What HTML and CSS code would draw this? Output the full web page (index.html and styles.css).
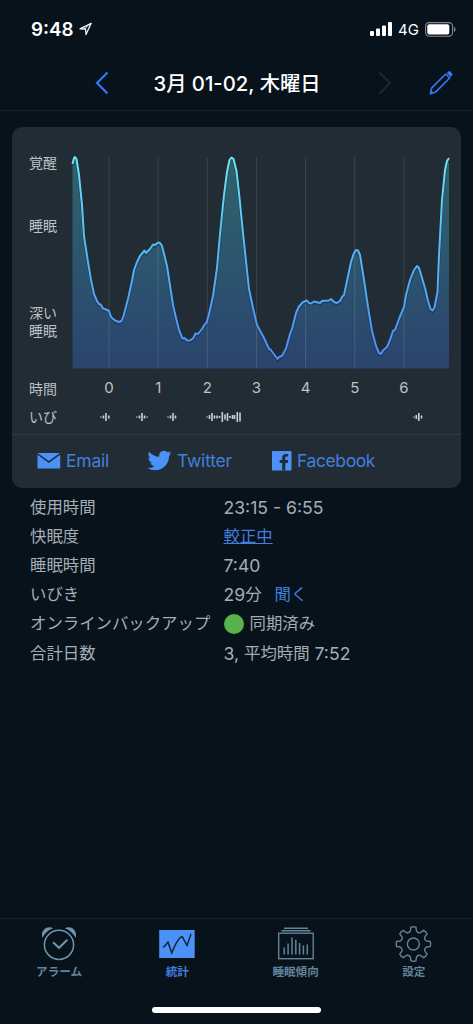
FILE: index.html
```html
<!DOCTYPE html>
<html lang="ja">
<head>
    <meta charset="UTF-8">
    <meta name="viewport" content="width=device-width, initial-scale=1.0">
    <title>統計</title>
    <link rel="stylesheet" href="styles.css">
</head>
<body>
    <div class="app">
        <div class="status-bar">
            <div class="status-left">
                <span class="clock">9:48</span>
                <svg width="14" height="14" viewBox="0 0 14 14">
                    <path d="M1 6.8 12.2 1.2 7 12.6 6.6 7.2Z" fill="none" stroke="#fff" stroke-width="1.2" stroke-linejoin="round"/>
                    <path d="M1 6.8 12.2 1.2 6.6 7.2Z" fill="#fff" opacity="0.5"/>
                </svg>
            </div>
            <div class="status-right">
                <svg width="22" height="14" viewBox="0 0 22 14" fill="#fff">
                    <rect x="0" y="9" width="4" height="5" rx="1"/>
                    <rect x="6" y="6.5" width="4" height="7.5" rx="1"/>
                    <rect x="12" y="3.5" width="4" height="10.5" rx="1"/>
                    <rect x="18" y="0" width="4" height="14" rx="1"/>
                </svg>
                <span class="network">4G</span>
                <svg width="31" height="15" viewBox="0 0 31 15">
                    <rect x="0.6" y="0.6" width="27" height="13.6" rx="3.6" fill="none" stroke="#858b90" stroke-width="1.1"/>
                    <rect x="2.3" y="2.3" width="22" height="10.2" rx="2" fill="#fff"/>
                    <path d="M29 5v4.8c1-.4 1.5-1.3 1.5-2.4S30 5.4 29 5Z" fill="#858b90"/>
                </svg>
            </div>
        </div>

        <div class="nav">
            <svg class="prev" width="14" height="24" viewBox="0 0 14 24">
                <path d="M12.5 1.5 2 12l10.5 10.5" fill="none" stroke="#3478f6" stroke-width="2.2"/>
            </svg>
            <h1 class="title">3月 01-02, 木曜日</h1>
            <svg class="next" width="14" height="24" viewBox="0 0 14 24">
                <path d="M1.5 1.5 12 12 1.5 22.5" fill="none" stroke="#1d2832" stroke-width="2"/>
            </svg>
            <svg class="edit" width="26" height="26" viewBox="0 0 26 26">
                <path d="M3.6 18.1 17.7 4 21.7 8 7.6 22.1 2.4 23.7Z" fill="none" stroke="#3478f6" stroke-width="1.6" stroke-linejoin="round"/>
                <path d="M2.4 23.7 3.3 20.4 5.6 22.7Z" fill="#3478f6"/>
                <path d="M18.8 3 20.1 1.7q1.2-1.2 2.4 0l1.5 1.5q1.2 1.2 0 2.4L22.7 6.9Z" fill="#3478f6"/>
            </svg>
        </div>

        <div class="card">
            <div class="chart-row">
                <div class="levels">
                    <span>覚醒</span>
                    <span>睡眠</span>
                    <span>深い<br>睡眠</span>
                </div>
                <svg class="chart" width="379" height="217" viewBox="71 152 379 217">
                    <defs>
                        <linearGradient id="line" gradientUnits="userSpaceOnUse" x1="0" y1="156" x2="0" y2="360">
                            <stop offset="0" stop-color="#6ee8f4"/>
                            <stop offset="0.45" stop-color="#56b9f5"/>
                            <stop offset="1" stop-color="#4a8df8"/>
                        </linearGradient>
                        <linearGradient id="area" gradientUnits="userSpaceOnUse" x1="0" y1="156" x2="0" y2="369">
                            <stop offset="0" stop-color="#30626c"/>
                            <stop offset="0.5" stop-color="#2c556e"/>
                            <stop offset="1" stop-color="#2a446e"/>
                        </linearGradient>
                    </defs>
                    <path id="fill" fill="url(#area)"/>
                    <g id="grid" stroke="#fff" stroke-opacity="0.12"></g>
                    <path id="shadow" fill="none" stroke="#0c1924" stroke-opacity="0.35" stroke-width="3" transform="translate(0 1)"/>
                    <path id="curve" fill="none" stroke="url(#line)" stroke-width="2" stroke-linejoin="round"/>
                </svg>
            </div>

            <div class="hours">
                <span class="row-label">時間</span>
                <span>0</span><span>1</span><span>2</span><span>3</span><span>4</span><span>5</span><span>6</span>
            </div>

            <div class="snore">
                <span class="row-label">いび</span>
                <svg width="379" height="14" viewBox="71 409 379 14">
                    <path id="snore" fill="none" stroke="#cdd0d2" stroke-width="1.6"/>
                </svg>
            </div>

            <div class="share">
                <a class="email">
                    <svg width="24" height="16" viewBox="0 0 24 16" fill="#4b91f8">
                        <path d="M.5 0h22.5L11.8 7.9Z"/>
                        <path d="M.5 1.7 11.8 9.9 23.2 1.7V15.5H.5Z"/>
                    </svg>
                    Email
                </a>
                <a class="twitter">
                    <svg width="25" height="21" viewBox="0 1.5 24 21" fill="#4b91f8">
                        <path d="M23.95 4.57a10 10 0 0 1-2.82.77 4.96 4.96 0 0 0 2.16-2.72c-.95.56-2 .96-3.13 1.18a4.92 4.92 0 0 0-8.38 4.48C7.69 8.09 4.07 6.13 1.64 3.16a4.82 4.82 0 0 0-.67 2.48c0 1.71.87 3.21 2.19 4.1a4.9 4.9 0 0 1-2.23-.62v.06a4.92 4.92 0 0 0 3.95 4.83 5 5 0 0 1-2.21.08 4.94 4.94 0 0 0 4.6 3.42A9.87 9.87 0 0 1 0 19.54a14 14 0 0 0 7.55 2.21c9.05 0 14-7.5 14-13.99 0-.21 0-.42-.02-.63a9.9 9.9 0 0 0 2.42-2.56Z"/>
                    </svg>
                    Twitter
                </a>
                <a class="facebook">
                    <svg width="20" height="20" viewBox="0 0 20 20">
                        <rect width="19.5" height="19.5" rx="1" fill="#4b91f8"/>
                        <path d="M10.2 19.5V12H7.7V9h2.5V6.8c0-2.6 1.5-3.9 3.8-3.9h2.2v2.7h-1.6c-1.1 0-1.3.6-1.3 1.4v2h2.9l-.4 3h-2.5v7.5Z" fill="#222c35"/>
                    </svg>
                    Facebook
                </a>
            </div>
        </div>

        <dl class="details">
            <dt>使用時間</dt><dd><span class="num">23:15 - 6:55</span></dd>
            <dt>快眠度</dt><dd><a class="calibrate">較正中</a></dd>
            <dt>睡眠時間</dt><dd><span class="num">7:40</span></dd>
            <dt>いびき</dt><dd><span class="num">29</span>分<a class="listen">聞く</a></dd>
            <dt>オンラインバックアップ</dt><dd><span class="dot"></span>同期済み</dd>
            <dt>合計日数</dt><dd><span class="num">3, </span>平均時間<span class="num"> 7:52</span></dd>
        </dl>

        <div class="tabs">
            <div class="tab">
                <svg width="38" height="36" viewBox="0 0 38 36" fill="none" stroke="#6f95ad">
                    <circle cx="19" cy="18.8" r="14.6" stroke-width="1.5"/>
                    <path d="M13 16.3l6 5.5 8.3-8" stroke-width="2"/>
                    <path d="M2.2 11.8C.6 3.8 7-.9 13.2 2.2 8.5 3.7 4.7 7.3 2.2 11.8Z" fill="#6f95ad" stroke="none"/>
                    <path d="M35.8 11.8C37.4 3.8 31-.9 24.8 2.2 29.5 3.7 33.3 7.3 35.8 11.8Z" fill="#6f95ad" stroke="none"/>
                </svg>
                <span>アラーム</span>
            </div>
            <div class="tab active">
                <svg width="38" height="36" viewBox="0 0 38 36">
                    <rect x="1.2" y="4" width="35.5" height="28" rx="0.5" fill="#4b91f8"/>
                    <path d="M5.3 21.5 10 16.2 13.8 27C17 19 20.5 10.8 24.3 10.8L29.1 19.5 33 7.7" fill="none" stroke="#10212f" stroke-width="1.4"/>
                </svg>
                <span>統計</span>
            </div>
            <div class="tab">
                <svg width="38" height="36" viewBox="0 0 38 36" fill="none" stroke="#628399">
                    <path d="M7 2.2h24M4.5 4.7h29" stroke-width="1.4"/>
                    <rect x="1.7" y="7.2" width="34.5" height="25.5" stroke-width="1.4"/>
                    <path d="M7.2 28.5v-7M11.1 28.5V17.5M15 28.5V11.500M18.800 28.500V13.800M22.600 28.500V17M26.400 28.500V19.500M30.300 28.500V18.500" stroke-width="1.5"/>
                </svg>
                <span>睡眠傾向</span>
            </div>
            <div class="tab">
                <svg width="38" height="36" viewBox="0 0 38 36" fill="none" stroke="#628399">
                    <path id="gear" stroke-width="1.4" stroke-linejoin="round"/>
                    <circle cx="18.4" cy="18" r="6" stroke-width="1.4"/>
                </svg>
                <span>設定</span>
            </div>
        </div>
        <div class="home-bar"></div>
    </div>

    <script>
        // Sleep depth through the night
        const points = [
            [72.5,164],[74,158],[75,157],[76.5,159],[79,175],[82,205],[84,236],[88,262],[91,280],[94,294],[97,301],[99,304],[101,305],[103,308.5],
            [106,309.5],[109,311],[111,317],[115,320.5],[119,322],[121.5,321],[123.5,316],[128,299],[132,281],[134,270],[137,262],[140,256],
            [144.5,250.5],[146,253],[150,249],[153,244.5],[155,245],[158,242.5],[160,243],[162,246],[167,266],[173,305],[176,318],[179,330],
            [182.5,338.5],[184.5,338],[187,340.5],[190,340.5],[193,338.5],[195.5,333.5],[198,334],[202,329],[205,324],[206.5,323],[209,314],[213,296],
            [217,268],[220,234],[224,195],[227,172],[229.5,160],[231.5,157.5],[233.5,159],[236.5,171],[239,193],[243,233],[249,289],
            [253,308],[257,325],[264,338],[269,349],[270.5,349.5],[276,357],[277.5,359],[279,357],[282,356],[286,348.5],[290,334],[292,329],
            [296,313],[299,306.5],[303,302],[307,300.5],[309,303],[311,303.5],[314,301.5],[320,303],[322,301],[329,300.5],[331,299],[334,302],
            [337,303],[340,301],[342,297],[344,295],[347,281],[351,262],[354,253],[356,250],[358,250.5],[360,255],[364,280],[368,307],[372,331],
            [376,346],[379,353],[381,354],[383,350.5],[387,347],[390,340],[393,331],[395,330],[399,319],[404,307],[406,295],[410,280],[414,270],
            [417,266],[419,268],[425,288],[428,301],[430.5,309],[432.5,310.5],[434.5,307.5],[437.5,292],[439,255],[442,200],[445,170],[447,161],[449,158]
        ];
        const line = 'M' + points.map(p => p.join(' ')).join('L');
        document.getElementById('curve').setAttribute('d', line);
        document.getElementById('shadow').setAttribute('d', line);
        document.getElementById('fill').setAttribute('d', line + 'V368.5H72.5Z');

        // One grid line per hour
        let grid = '';
        for (let i = 0; i < 7; i++) {
            const x = 109 + i * 49.15;
            grid += `<path d="M${x} 157.5V368.5"/>`;
        }
        document.getElementById('grid').innerHTML = grid;

        // Snoring: x position and bar height
        const snores = [
            [101,1],[103.5,3],[106,8],[108.8,3],
            [137,1],[139.5,3],[142,8],[144.5,3],[147,1],
            [168,1],[170.5,3],[173,8],[175.5,3],
            [207,1],[209.5,4],[212,8],[214.5,3],[217,3],[219.5,2],[222.3,10],[225,5],[227.5,8],[230,2],[232.5,4],[234.5,4],[237.3,10],[240,9],
            [414,1],[416.3,4],[418.8,8],[421.5,3]
        ];
        document.getElementById('snore').setAttribute('d',
            snores.map(([x, h]) => `M${x} ${417 - h / 2}v${h}`).join(''));

        // Gear with eight teeth
        let gear = '';
        for (let i = 0; i < 8; i++) {
            const at = (r, deg) => {
                const a = (i * 45 + deg - 90) * Math.PI / 180;
                return (18.4 + r * Math.cos(a)).toFixed(2) + ' ' + (18 + r * Math.sin(a)).toFixed(2);
            };
            gear += `${i ? 'L' : 'M'}${at(13.5, -13)}L${at(17, -8.5)}Q${at(17.6, 0)} ${at(17, 8.5)}L${at(13.5, 13)}Q${at(11.4, 22.5)} ${at(13.5, 32)}`;
        }
        document.getElementById('gear').setAttribute('d', gear + 'Z');
    </script>
</body>
</html>
```
FILE: styles.css
```css
:root {
    --bg: #07121b;
    --card: #222c35;
    --blue: #4b91f8;
    --link: #427fdb;
    --text: #a5adb5;
    --tab: #628399;
}

* {
    margin: 0;
    padding: 0;
    box-sizing: border-box;
}

body {
    background-color: var(--bg);
    color: var(--text);
    font-family: Inter, "Noto Sans CJK JP", sans-serif;
}

svg {
    display: block;
    flex: none;
}

.app {
    width: 473px;
    height: 1024px;
    display: flex;
    flex-direction: column;
    overflow: hidden;
}

.status-bar {
    height: 58px;
    padding: 0 17px 0 31px;
    display: flex;
    justify-content: space-between;
    align-items: center;
    color: #fff;
}

.status-left,
.status-right {
    display: flex;
    align-items: center;
    gap: 5px;
}

.status-right {
    gap: 6px;
}

.clock {
    font-size: 18.8px;
    font-weight: 600;
}

.network {
    font-size: 15px;
    font-weight: 400;
}

.nav {
    height: 53px;
    padding: 0 19px 2px 95px;
    display: flex;
    align-items: center;
    border-bottom: 1px solid #14222b;
}

.title {
    width: 168px;
    margin: 0 57px 2px 44px;
    display: flex;
    justify-content: center;
    white-space: nowrap;
    color: #fff;
    font-size: 20.3px;
    font-weight: 500;
}

.edit {
    margin-left: auto;
}

.card {
    height: 361px;
    margin: 16px 12px 0;
    background-color: var(--card);
    border-radius: 10px;
    color: #bec2c6;
    font-size: 14px;
}

.chart-row {
    display: flex;
    padding: 25px 0 0 17px;
}

.levels {
    width: 42px;
    line-height: 18px;
}

.levels span {
    display: block;
    margin-top: 2px;
}

.levels span:nth-child(2) {
    margin-top: 45px;
}

.levels span:nth-child(3) {
    margin-top: 69px;
}

.hours {
    height: 37px;
    display: flex;
    align-items: center;
    padding-left: 17px;
    font-size: 15px;
}

.hours span {
    width: 49.15px;
    text-align: center;
}

.hours .row-label,
.snore .row-label {
    width: 42px;
    text-align: left;
    font-size: 14px;
}

.hours .row-label {
    margin-right: 13.5px;
}

.snore {
    height: 28px;
    display: flex;
    align-items: center;
    padding: 0 0 9px 17px;
}

.share {
    height: 54px;
    display: flex;
    border-top: 1px solid #303a43;
    color: var(--link);
    font-size: 17.5px;
    letter-spacing: -0.2px;
}

.share a {
    display: flex;
    align-items: center;
    gap: 5px;
    height: 51px;
}

.email {
    width: 110px;
    margin-left: 25px;
}

.twitter {
    width: 125px;
}

.facebook {
    letter-spacing: -0.4px;
}

.details {
    display: grid;
    grid-template-columns: 193.5px 1fr;
    grid-auto-rows: 29.1px;
    align-items: center;
    margin: 5px 0 0 30px;
    font-size: 16.4px;
    line-height: 29px;
}

.details dd {
    display: flex;
    align-items: center;
    white-space: pre;
}

.num {
    font-size: 17.6px;
}

.calibrate {
    color: var(--link);
    text-decoration: underline;
}

.listen {
    margin-left: 13px;
    color: var(--link);
}

.dot {
    width: 20px;
    height: 20px;
    margin-right: 6px;
    border-radius: 50%;
    background-color: #59b24b;
}

.tabs {
    height: 88px;
    margin-top: auto;
    padding-top: 7px;
    display: grid;
    grid-template-columns: repeat(4, 1fr);
    border-top: 1px solid #13242d;
}

.tab {
    display: flex;
    flex-direction: column;
    align-items: center;
    color: var(--tab);
    font-size: 11.6px;
    font-weight: 600;
    line-height: 21px;
}

.tab.active {
    color: var(--link);
}

.home-bar {
    width: 169px;
    height: 6px;
    margin: 1px auto 11px;
    border-radius: 3px;
    background-color: #fff;
}
```
